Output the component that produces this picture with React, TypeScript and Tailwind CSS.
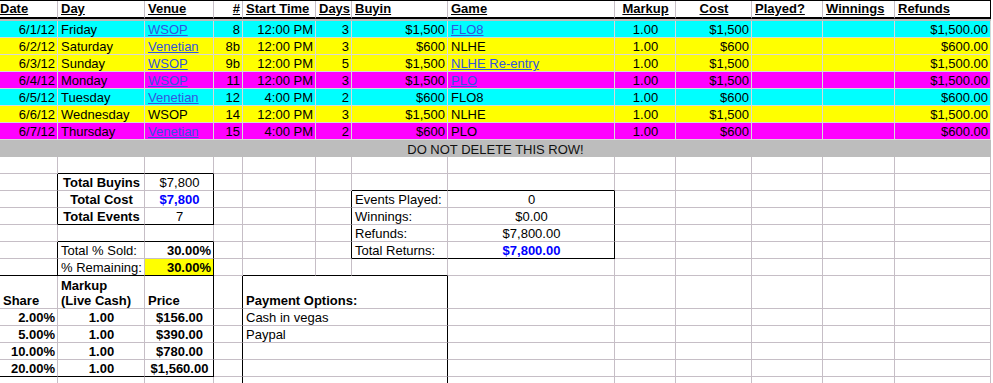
import React from 'react';
import clsx from 'clsx';

const GRID =
  'grid w-[991px] grid-cols-[58px_87px_69px_29px_73px_36px_96px_167px_61px_76px_71px_72px_96px]';

type Cell = {
  t?: React.ReactNode;
  a?: 'l' | 'r' | 'c';
  bold?: boolean;
  blue?: boolean;
  link?: boolean;
  bg?: string;
  rb?: boolean; // black right edge
  bb?: boolean; // black bottom edge
  span3?: boolean;
};

const HEADERS: { t: string; a: 'l' | 'r' | 'c' }[] = [
  { t: 'Date', a: 'l' },
  { t: 'Day', a: 'l' },
  { t: 'Venue', a: 'l' },
  { t: '#', a: 'r' },
  { t: 'Start Time', a: 'l' },
  { t: 'Days', a: 'l' },
  { t: 'Buyin', a: 'l' },
  { t: 'Game', a: 'l' },
  { t: 'Markup', a: 'c' },
  { t: 'Cost', a: 'c' },
  { t: 'Played?', a: 'l' },
  { t: 'Winnings', a: 'l' },
  { t: 'Refunds', a: 'l' },
];

const CYAN = 'bg-[#00ffff]';
const YELLOW = 'bg-[#ffff00]';
const PINK = 'bg-[#ff00ff]';

const EVENTS = [
  { date: '6/1/12', day: 'Friday', venue: 'WSOP', vLink: true, num: '8', time: '12:00 PM', days: '3', buyin: '$1,500', game: 'FLO8', gLink: true, cost: '$1,500', refund: '$1,500.00', bg: CYAN },
  { date: '6/2/12', day: 'Saturday', venue: 'Venetian', vLink: true, num: '8b', time: '12:00 PM', days: '3', buyin: '$600', game: 'NLHE', gLink: false, cost: '$600', refund: '$600.00', bg: YELLOW },
  { date: '6/3/12', day: 'Sunday', venue: 'WSOP', vLink: true, num: '9b', time: '12:00 PM', days: '5', buyin: '$1,500', game: 'NLHE Re-entry', gLink: true, cost: '$1,500', refund: '$1,500.00', bg: YELLOW },
  { date: '6/4/12', day: 'Monday', venue: 'WSOP', vLink: true, num: '11', time: '12:00 PM', days: '3', buyin: '$1,500', game: 'PLO', gLink: true, cost: '$1,500', refund: '$1,500.00', bg: PINK },
  { date: '6/5/12', day: 'Tuesday', venue: 'Venetian', vLink: true, num: '12', time: '4:00 PM', days: '2', buyin: '$600', game: 'FLO8', gLink: false, cost: '$600', refund: '$600.00', bg: CYAN },
  { date: '6/6/12', day: 'Wednesday', venue: 'WSOP', vLink: false, num: '14', time: '12:00 PM', days: '3', buyin: '$1,500', game: 'NLHE', gLink: false, cost: '$1,500', refund: '$1,500.00', bg: YELLOW },
  { date: '6/7/12', day: 'Thursday', venue: 'Venetian', vLink: true, num: '15', time: '4:00 PM', days: '2', buyin: '$600', game: 'PLO', gLink: false, cost: '$600', refund: '$600.00', bg: PINK },
];

// sparse row -> 13 cells (cols 4-6 collapse into one cell when a payment box cell is given)
function mk(patch: Record<number, Cell>, pay?: Cell): Cell[] {
  const out: Cell[] = [];
  for (let i = 0; i < 13; i++) {
    if (pay && i === 4) {
      out.push({ ...pay, span3: true, rb: true });
      i = 6;
      continue;
    }
    out.push(patch[i] ?? {});
  }
  return out;
}

function SheetCell({ c, fill }: { c: Cell; fill?: boolean }) {
  return (
    <div
      className={clsx(
        'flex items-end whitespace-nowrap border-r border-b pl-[3px] pr-[2px] leading-[15px]',
        c.rb ? 'border-r-black' : fill ? 'border-r-[#d8d8d8]' : 'border-r-[#c6bec6]',
        c.bb ? 'border-b-black' : fill ? 'border-b-[#d8d8d8]' : 'border-b-[#c6bec6]',
        c.a === 'r' ? 'justify-end' : c.a === 'c' ? 'justify-center' : 'justify-start',
        c.span3 && 'col-span-3',
        c.bold && 'font-bold',
        c.blue && 'text-[#0000ff]',
        c.bg
      )}
    >
      {c.link ? <span className="text-[#3355dd] underline">{c.t}</span> : c.t}
    </div>
  );
}

function Row({ cells, fill, tall }: { cells: Cell[]; fill?: boolean; tall?: boolean }) {
  return (
    <div className={clsx(GRID, tall ? 'h-[33px]' : 'h-[17px]')}>
      {cells.map((c, i) => (
        <SheetCell key={i} c={c} fill={fill} />
      ))}
    </div>
  );
}

const box = { rb: true };

const LOWER: { cells: Cell[]; tall?: boolean }[] = [
  { cells: mk({ 1: { bb: true }, 2: { bb: true } }) },
  {
    cells: mk({
      0: box,
      1: { t: 'Total Buyins', a: 'c', bold: true },
      2: { t: '$7,800', a: 'c', rb: true },
      6: { bb: true },
      7: { bb: true },
    }),
  },
  {
    cells: mk({
      0: box,
      1: { t: 'Total Cost', a: 'c', bold: true },
      2: { t: '$7,800', a: 'c', bold: true, blue: true, rb: true },
      5: box,
      6: { t: 'Events Played:' },
      7: { t: '0', a: 'c', rb: true },
    }),
  },
  {
    cells: mk({
      0: box,
      1: { t: 'Total Events', a: 'c', bold: true, bb: true },
      2: { t: '7', a: 'c', rb: true, bb: true },
      5: box,
      6: { t: 'Winnings:' },
      7: { t: '$0.00', a: 'c', rb: true },
    }),
  },
  {
    cells: mk({
      1: { bb: true },
      2: { bb: true },
      5: box,
      6: { t: 'Refunds:' },
      7: { t: '$7,800.00', a: 'c', rb: true },
    }),
  },
  {
    cells: mk({
      0: box,
      1: { t: 'Total % Sold:' },
      2: { t: '30.00%', a: 'r', bold: true, rb: true },
      5: box,
      6: { t: 'Total Returns:', bb: true },
      7: { t: '$7,800.00', a: 'c', bold: true, blue: true, rb: true, bb: true },
    }),
  },
  {
    cells: mk({
      0: { rb: true, bb: true },
      1: { t: '% Remaining:', bb: true },
      2: { t: '30.00%', a: 'r', bold: true, rb: true, bb: true, bg: YELLOW },
      4: { bb: true },
      5: { bb: true },
      6: { bb: true },
    }),
  },
  {
    tall: true,
    cells: mk(
      {
        0: { t: 'Share', bold: true },
        1: {
          t: (
            <span className="block">
              Markup
              <br />
              (Live Cash)
            </span>
          ),
          bold: true,
        },
        2: { t: 'Price', bold: true, rb: true },
        3: box,
      },
      { t: 'Payment Options:', bold: true }
    ),
  },
  {
    cells: mk(
      {
        0: { t: '2.00%', a: 'r', bold: true },
        1: { t: '1.00', a: 'c', bold: true },
        2: { t: '$156.00', a: 'c', bold: true, rb: true },
        3: box,
      },
      { t: 'Cash in vegas' }
    ),
  },
  {
    cells: mk(
      {
        0: { t: '5.00%', a: 'r', bold: true },
        1: { t: '1.00', a: 'c', bold: true },
        2: { t: '$390.00', a: 'c', bold: true, rb: true },
        3: box,
      },
      { t: 'Paypal' }
    ),
  },
  {
    cells: mk(
      {
        0: { t: '10.00%', a: 'r', bold: true },
        1: { t: '1.00', a: 'c', bold: true },
        2: { t: '$780.00', a: 'c', bold: true, rb: true },
        3: box,
      },
      {}
    ),
  },
  {
    cells: mk(
      {
        0: { t: '20.00%', a: 'r', bold: true, bb: true },
        1: { t: '1.00', a: 'c', bold: true, bb: true },
        2: { t: '$1,560.00', a: 'c', bold: true, rb: true, bb: true },
        3: box,
      },
      {}
    ),
  },
  { cells: mk({ 3: box }, {}) },
];

export default function App() {
  return (
    <div className="h-[383px] w-[993px] overflow-hidden bg-white font-['Liberation_Sans',Arial,sans-serif] text-[13px] text-black">
      {/* header */}
      <div className={clsx(GRID, 'h-[19px] border-t border-black')}>
        {HEADERS.map((h, i) => (
          <div
            key={h.t}
            className={clsx(
              'flex items-end whitespace-nowrap border-r border-b-2 border-b-black pb-[1px] pr-[2px] font-bold leading-[15px]',
              i === 0 ? 'pl-0' : 'pl-[3px]',
              i === 12 ? 'border-r-black' : 'border-r-[#c6bec6]',
              h.a === 'r' ? 'justify-end' : h.a === 'c' ? 'justify-center' : 'justify-start'
            )}
          >
            <span className="underline">{h.t}</span>
          </div>
        ))}
      </div>
      <div className="h-[2px] w-[991px] bg-[#bdbdbd]" />

      {/* schedule */}
      {EVENTS.map((e) => (
        <Row
          key={e.date}
          fill
          cells={[
            { t: e.date, a: 'r', bg: e.bg },
            { t: e.day, bg: e.bg },
            { t: e.venue, link: e.vLink, bg: e.bg },
            { t: e.num, a: 'r', bg: e.bg },
            { t: e.time, a: 'r', bg: e.bg },
            { t: e.days, a: 'r', bg: e.bg },
            { t: e.buyin, a: 'r', bg: e.bg },
            { t: e.game, link: e.gLink, bg: e.bg },
            { t: '1.00', a: 'c', bg: e.bg },
            { t: e.cost, a: 'r', bg: e.bg },
            { bg: e.bg },
            { bg: e.bg },
            { t: e.refund, a: 'r', bg: e.bg },
          ]}
        />
      ))}
      <div className="flex h-[17px] w-[991px] items-end justify-center bg-[#bdbdbd] leading-[15px] text-[#111]">
        DO NOT DELETE THIS ROW!
      </div>

      {/* summary blocks */}
      {LOWER.map((r, i) => (
        <Row key={i} cells={r.cells} tall={r.tall} />
      ))}
    </div>
  );
}
